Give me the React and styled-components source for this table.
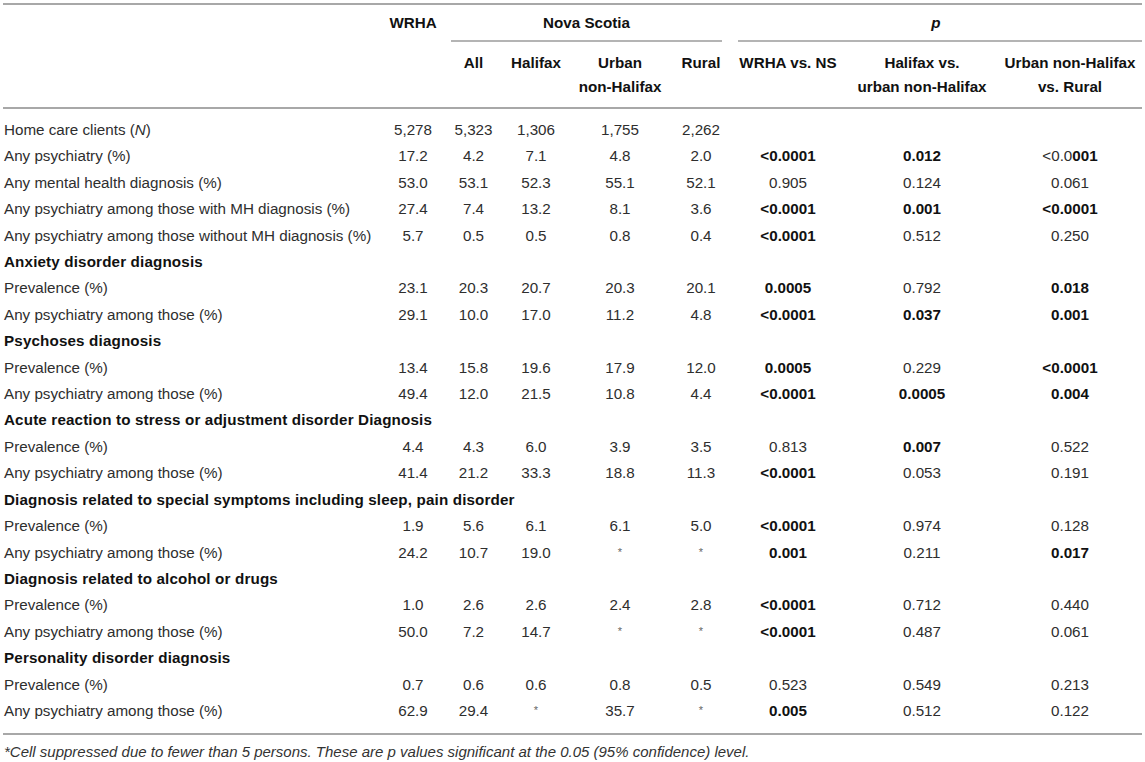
import React from 'react';
import styled, { createGlobalStyle } from 'styled-components';

const GlobalStyle = createGlobalStyle`
  html, body {
    margin: 0;
    padding: 0;
    background: #ffffff;
  }
  body {
    font-family: "Liberation Sans", Arial, Helvetica, sans-serif;
    color: #222222;
  }
`;

// column widths, left to right (label, WRHA, All, Halifax, Urban, Rural, 3 p-value columns)
const colWidths = [380, 60, 61, 64, 104, 58, 116, 152, 144];

const Page = styled.div`
  padding: 3px 3px 0 3px;
`;

const Table = styled.table`
  width: 1139px;
  table-layout: fixed;
  border-collapse: collapse;
  font-size: 15.2px;
  border-top: 2px solid #a8a8a8;
  border-bottom: 2px solid #a8a8a8;
`;

const Head = styled.thead`
  border-bottom: 2px solid #a8a8a8;
`;

const HeadTop = styled.th`
  font-weight: bold;
  text-align: center;
  vertical-align: top;
  padding: 8px 0 0 0;
  line-height: 20px;
  color: #111;
`;

const HeadSub = styled.th`
  font-weight: bold;
  text-align: center;
  vertical-align: top;
  padding: 9px 0 8px 0;
  line-height: 24px;
  color: #111;
  white-space: nowrap;
`;

const SpanTitle = styled.div`
  font-style: ${(p) => (p.$italic ? 'italic' : 'normal')};
`;

const SpanRule = styled.div`
  margin: 7px ${(p) => p.$right}px 0 ${(p) => p.$left}px;
  border-bottom: 2px solid #b4b4b4;
`;

const Row = styled.tr`
  & > td {
    padding-top: ${(p) => (p.$first ? '8px' : '0')};
    padding-bottom: ${(p) => (p.$last ? '9px' : '0')};
  }
`;

const Label = styled.td`
  padding-left: 1px;
  line-height: 26.4px;
  white-space: nowrap;
  font-weight: ${(p) => (p.$section ? 'bold' : 'normal')};
  letter-spacing: ${(p) => (p.$section ? '0.15px' : '0')};
  color: ${(p) => (p.$section ? '#111' : '#2e2e2e')};
`;

const Cell = styled.td`
  text-align: center;
  line-height: 26.4px;
  white-space: nowrap;
  color: #2e2e2e;

  b {
    color: #111;
  }
`;

const Star = styled.span`
  font-size: 11px;
  line-height: 0;
  color: #666;
  position: relative;
  top: -2px;
`;

const Footnote = styled.p`
  margin: 8px 0 0 1px;
  font-size: 15px;
  font-style: italic;
  color: #333;
`;

const rows = [
  { label: <>Home care clients (<i>N</i>)</>, v: ['5,278', '5,323', '1,306', '1,755', '2,262', '', '', ''] },
  { label: 'Any psychiatry (%)', v: ['17.2', '4.2', '7.1', '4.8', '2.0', 'b:<0.0001', 'b:0.012', 'mix'] },
  { label: 'Any mental health diagnosis (%)', v: ['53.0', '53.1', '52.3', '55.1', '52.1', '0.905', '0.124', '0.061'] },
  { label: 'Any psychiatry among those with MH diagnosis (%)', v: ['27.4', '7.4', '13.2', '8.1', '3.6', 'b:<0.0001', 'b:0.001', 'b:<0.0001'] },
  { label: 'Any psychiatry among those without MH diagnosis (%)', v: ['5.7', '0.5', '0.5', '0.8', '0.4', 'b:<0.0001', '0.512', '0.250'] },
  { section: 'Anxiety disorder diagnosis' },
  { label: 'Prevalence (%)', v: ['23.1', '20.3', '20.7', '20.3', '20.1', 'b:0.0005', '0.792', 'b:0.018'] },
  { label: 'Any psychiatry among those (%)', v: ['29.1', '10.0', '17.0', '11.2', '4.8', 'b:<0.0001', 'b:0.037', 'b:0.001'] },
  { section: 'Psychoses diagnosis' },
  { label: 'Prevalence (%)', v: ['13.4', '15.8', '19.6', '17.9', '12.0', 'b:0.0005', '0.229', 'b:<0.0001'] },
  { label: 'Any psychiatry among those (%)', v: ['49.4', '12.0', '21.5', '10.8', '4.4', 'b:<0.0001', 'b:0.0005', 'b:0.004'] },
  { section: 'Acute reaction to stress or adjustment disorder Diagnosis' },
  { label: 'Prevalence (%)', v: ['4.4', '4.3', '6.0', '3.9', '3.5', '0.813', 'b:0.007', '0.522'] },
  { label: 'Any psychiatry among those (%)', v: ['41.4', '21.2', '33.3', '18.8', '11.3', 'b:<0.0001', '0.053', '0.191'] },
  { section: 'Diagnosis related to special symptoms including sleep, pain disorder' },
  { label: 'Prevalence (%)', v: ['1.9', '5.6', '6.1', '6.1', '5.0', 'b:<0.0001', '0.974', '0.128'] },
  { label: 'Any psychiatry among those (%)', v: ['24.2', '10.7', '19.0', '*', '*', 'b:0.001', '0.211', 'b:0.017'] },
  { section: 'Diagnosis related to alcohol or drugs' },
  { label: 'Prevalence (%)', v: ['1.0', '2.6', '2.6', '2.4', '2.8', 'b:<0.0001', '0.712', '0.440'] },
  { label: 'Any psychiatry among those (%)', v: ['50.0', '7.2', '14.7', '*', '*', 'b:<0.0001', '0.487', '0.061'] },
  { section: 'Personality disorder diagnosis' },
  { label: 'Prevalence (%)', v: ['0.7', '0.6', '0.6', '0.8', '0.5', '0.523', '0.549', '0.213'] },
  { label: 'Any psychiatry among those (%)', v: ['62.9', '29.4', '*', '35.7', '*', 'b:0.005', '0.512', '0.122'] },
];

function renderValue(val) {
  if (val === '*') return <Star>*</Star>;
  if (val === 'mix') return <>&lt;0.0<b>001</b></>;
  if (val.startsWith('b:')) return <b>{val.slice(2)}</b>;
  return val;
}

export default function App() {
  return (
    <Page>
      <GlobalStyle />
      <Table>
        <colgroup>
          {colWidths.map((w, i) => (
            <col key={i} style={{ width: w }} />
          ))}
        </colgroup>
        <Head>
          <tr>
            <HeadTop rowSpan={2} />
            <HeadTop rowSpan={2}>WRHA</HeadTop>
            <HeadTop colSpan={4}>
              <SpanTitle>Nova Scotia</SpanTitle>
              <SpanRule $left={8} $right={8} />
            </HeadTop>
            <HeadTop colSpan={3}>
              <SpanTitle $italic>p</SpanTitle>
              <SpanRule $left={8} $right={0} />
            </HeadTop>
          </tr>
          <tr>
            <HeadSub>All</HeadSub>
            <HeadSub>Halifax</HeadSub>
            <HeadSub>Urban<br />non-Halifax</HeadSub>
            <HeadSub>Rural</HeadSub>
            <HeadSub>WRHA vs. NS</HeadSub>
            <HeadSub>Halifax vs.<br />urban non-Halifax</HeadSub>
            <HeadSub>Urban non-Halifax<br />vs. Rural</HeadSub>
          </tr>
        </Head>
        <tbody>
          {rows.map((r, i) => (
            <Row key={i} $first={i === 0} $last={i === rows.length - 1}>
              {r.section ? (
                <Label $section colSpan={9}>{r.section}</Label>
              ) : (
                <>
                  <Label>{r.label}</Label>
                  {r.v.map((val, j) => (
                    <Cell key={j}>{renderValue(val)}</Cell>
                  ))}
                </>
              )}
            </Row>
          ))}
        </tbody>
      </Table>
      <Footnote>
        *Cell suppressed due to fewer than 5 persons. These are p values significant at the 0.05 (95% confidence) level.
      </Footnote>
    </Page>
  );
}
